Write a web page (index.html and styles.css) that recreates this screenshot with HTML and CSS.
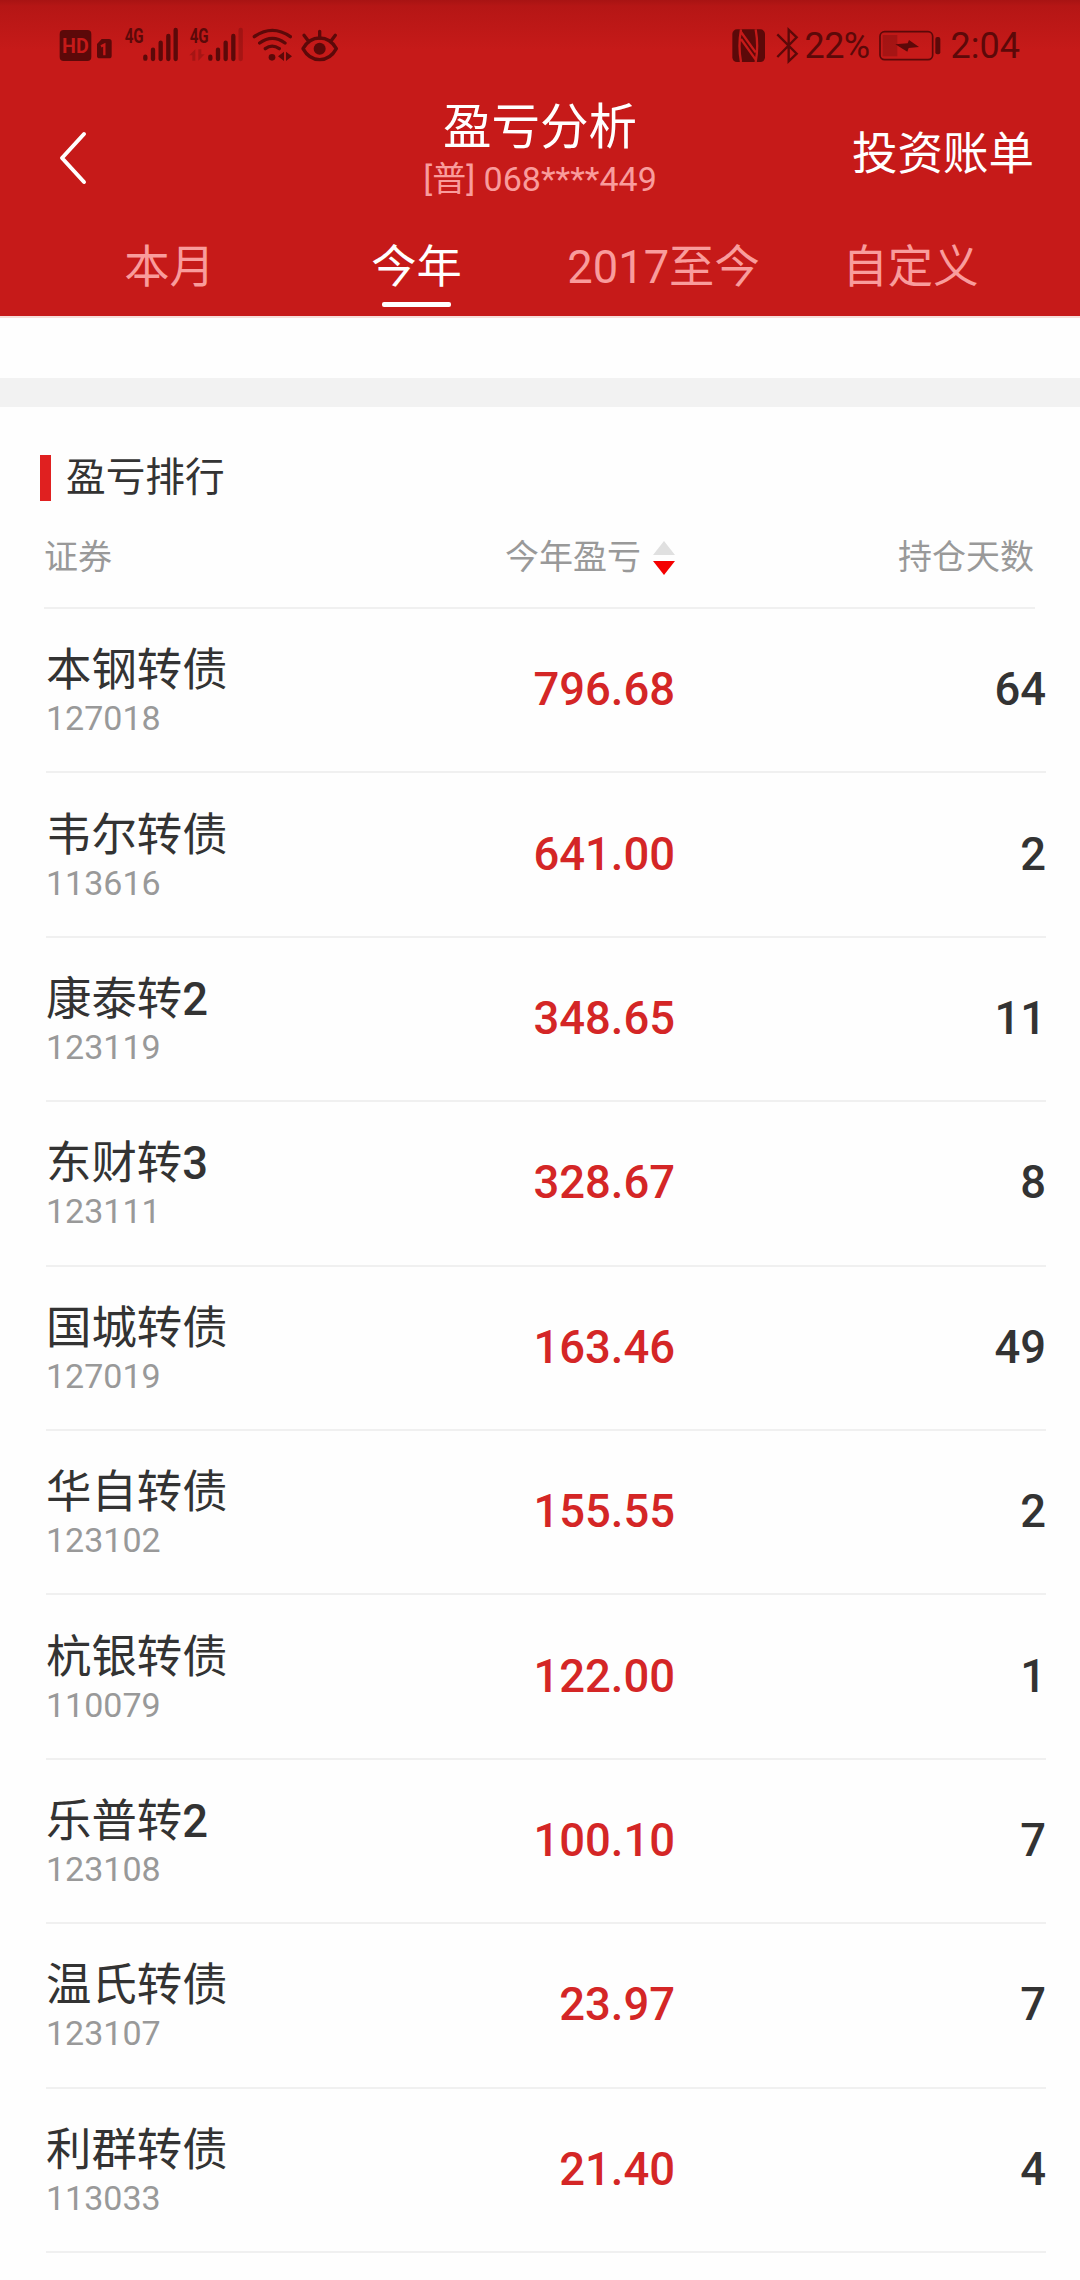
FILE: index.html
```html
<!DOCTYPE html>
<html lang="zh-CN">
    <head>
        <meta charset="utf-8">
        <title>盈亏分析</title>
        <link rel="stylesheet" href="styles.css">
    </head>
    <body>
        <div class="header">
            <div class="status">
                <div class="status-left">
                    <!-- HD + sim -->
                    <svg class="icon hd" width="54" height="40" viewBox="57 48 162 120">
                        <rect x="59" y="60" width="95" height="93" rx="12"/>
                        <text class="cut" x="106" y="128" text-anchor="middle" font-size="58" textLength="80" lengthAdjust="spacingAndGlyphs">HD</text>
                        <path d="M185 87h22q8 0 8 8v42q0 8-8 8h-28q-8 0-8-8v-35z"/>
                        <path class="cutline" d="M183 109l10-5v32"/>
                    </svg>
                    <svg class="icon sig" width="56" height="46" viewBox="252 30 168 138">
                        <text x="254" y="98" font-size="60" textLength="57" lengthAdjust="spacingAndGlyphs">4G</text>
                        <path class="bars" d="M316 140v6M339 119v28M362 98v49M385 78v69M407 60v87"/>
                    </svg>
                    <svg class="icon sig2" width="56" height="46" viewBox="447 30 168 138">
                        <text x="449" y="98" font-size="60" textLength="57" lengthAdjust="spacingAndGlyphs">4G</text>
                        <path class="bars" d="M511 140v6M534 119v28M557 98v49M580 78v69"/>
                        <path class="bars faint" d="M602 60v87"/>
                        <path class="faint" d="M448 136l18-18v34h-9v-16zM475 152v-34h9v15h10z"/>
                    </svg>
                    <svg class="icon wifi" width="40" height="40" viewBox="636 48 120 120">
                        <path class="line" d="M643 80q54-38 108 0M659 99q38-28 76 0M676 116q20-15 42 0"/>
                        <circle cx="696" cy="142" r="10"/>
                        <path d="M714 139l18-14v28zM738 125l18 14-18 14z"/>
                    </svg>
                    <svg class="icon eye" width="38" height="40" viewBox="784 48 114 120">
                        <path class="line" d="M790 116q18-32 50-32t50 32q-18 33-50 33t-50-33z"/>
                        <circle cx="840" cy="116" r="18"/>
                        <path class="line" d="M840 64v20M793 76l13 17M887 76l-13 17"/>
                    </svg>
                </div>
                <div class="status-right">
                    <!-- nfc -->
                    <svg class="icon nfc" width="34" height="40" viewBox="65 48 102 120">
                        <rect x="66" y="58" width="98" height="98" rx="14"/>
                        <path class="cutline" d="M92 58q-9 50 0 98M92 66l44 61M136 58q9 50 0 98M92 87l44 62"/>
                    </svg>
                    <svg class="icon bt" width="24" height="40" viewBox="198 48 72 120">
                        <path class="line" d="M202 73l58 58-24 23v-95l24 23-58 59"/>
                    </svg>
                    <span class="percent">22%</span>
                    <svg class="icon battery" width="62" height="40" viewBox="508 48 186 120">
                        <rect class="case" x="511" y="65" width="158" height="84" rx="14"/>
                        <rect class="level" x="519" y="75" width="44" height="64"/>
                        <path d="M557 103l37-3 4-10 30 21-31 3-4 11z"/>
                        <rect x="677" y="81" width="15" height="52" rx="6"/>
                    </svg>
                    <span class="time">2:04</span>
                </div>
            </div>
            <div class="nav">
                <svg class="back" width="30" height="54" viewBox="0 0 30 54">
                    <path d="M26 3L4 27l22 24"/>
                </svg>
                <div class="title">
                    <h1>盈亏分析</h1>
                    <div class="account">[普] 068****449</div>
                </div>
                <div class="bill">投资账单</div>
            </div>
            <div class="tabs">
                <div class="tab">本月</div>
                <div class="tab active">今年</div>
                <div class="tab">2017至今</div>
                <div class="tab">自定义</div>
            </div>
        </div>
        <div class="band"></div>
        <div class="rank">
            <h2>盈亏排行</h2>
            <div class="row head">
                <div>证券</div>
                <div class="sort">今年盈亏
                    <svg width="22" height="34" viewBox="0 0 22 34">
                        <path class="up" d="M11 0l11 14H0z"/>
                        <path class="down" d="M0 20h22L11 34z"/>
                    </svg>
                </div>
                <div class="held">持仓天数</div>
            </div>
            <div class="row">
                <div class="stock">本钢转债<span class="code">127018</span></div>
                <div class="profit">796.68</div>
                <div class="days">64</div>
            </div>
            <div class="row">
                <div class="stock">韦尔转债<span class="code">113616</span></div>
                <div class="profit">641.00</div>
                <div class="days">2</div>
            </div>
            <div class="row">
                <div class="stock">康泰转<b>2</b><span class="code">123119</span></div>
                <div class="profit">348.65</div>
                <div class="days">11</div>
            </div>
            <div class="row">
                <div class="stock">东财转<b>3</b><span class="code">123111</span></div>
                <div class="profit">328.67</div>
                <div class="days">8</div>
            </div>
            <div class="row">
                <div class="stock">国城转债<span class="code">127019</span></div>
                <div class="profit">163.46</div>
                <div class="days">49</div>
            </div>
            <div class="row">
                <div class="stock">华自转债<span class="code">123102</span></div>
                <div class="profit">155.55</div>
                <div class="days">2</div>
            </div>
            <div class="row">
                <div class="stock">杭银转债<span class="code">110079</span></div>
                <div class="profit">122.00</div>
                <div class="days">1</div>
            </div>
            <div class="row">
                <div class="stock">乐普转<b>2</b><span class="code">123108</span></div>
                <div class="profit">100.10</div>
                <div class="days">7</div>
            </div>
            <div class="row">
                <div class="stock">温氏转债<span class="code">123107</span></div>
                <div class="profit">23.97</div>
                <div class="days">7</div>
            </div>
            <div class="row">
                <div class="stock">利群转债<span class="code">113033</span></div>
                <div class="profit">21.40</div>
                <div class="days">4</div>
            </div>
        </div>
    </body>
</html>
```
FILE: styles.css
```css
*{
    margin: 0;
    padding: 0;
    box-sizing: border-box;
}
body{
    width: 1080px;
    height: 2280px;
    overflow: hidden;
    background-color: #fefefe;
    color: #333;
    font-family: Roboto, "Noto Sans CJK SC", sans-serif;
}
.header{
    height: 318px;
    background: linear-gradient(#a81313, #b51615 6px, #c61a19 50px);
    border-bottom: 2px solid #f6dedb;
    color: white;
}

/* status bar */
.status{
    display: flex;
    justify-content: space-between;
    height: 80px;
    padding: 20px 60px 0 59px;
    color: #5c0909;
}
.status-left, .status-right{
    display: flex;
    align-items: flex-end;
    height: 46px;
    line-height: 40px;
    font-size: 36px;
}
.icon{
    display: block;
    overflow: visible;
    fill: #5c0909;
    font-weight: bold;
}
.line, .bars, .case{
    fill: none;
    stroke: #5c0909;
    stroke-width: 10;
    stroke-linecap: round;
    stroke-linejoin: round;
}
.bt .line{
    stroke-width: 7;
    stroke-linecap: butt;
    stroke-linejoin: miter;
}
.bars{
    stroke-width: 13;
}
.case{
    stroke-width: 5;
}
.cut{
    fill: #c61a19;
}
.cutline{
    fill: none;
    stroke: #c61a19;
    stroke-width: 7;
}
.faint, .level{
    opacity: .3;
}
.sig{
    margin-left: 11px;
}
.sig2{
    margin-left: 9px;
}
.wifi{
    margin-left: 7px;
}
.eye{
    margin-left: 9px;
}
.bt{
    margin-left: 10px;
}
.percent{
    margin-left: 5px;
    width: 66px;
    letter-spacing: -.6px;
}
.battery{
    margin-left: 8px;
}
.time{
    margin-left: 10px;
}

/* title bar */
.nav{
    display: grid;
    grid-template-columns: 300px 1fr 300px;
    height: 140px;
    padding: 0 46px 0 57px;
}
.back{
    margin: 51px 0 0 1px;
    fill: none;
    stroke: white;
    stroke-width: 4;
    stroke-linecap: round;
    stroke-linejoin: round;
}
.title{
    padding: 18px 11px 0 0;
    text-align: center;
    white-space: nowrap;
}
.title h1{
    font-size: 48.5px;
    font-weight: normal;
    line-height: 60px;
}
.account{
    font-size: 34px;
    line-height: 42px;
    color: #f99c9c;
}
.bill{
    padding-top: 45px;
    font-size: 45.5px;
    line-height: 60px;
    text-align: right;
}
.tabs{
    display: grid;
    grid-template-columns: 247px 247px 247px 247px;
    justify-content: center;
    height: 96px;
}
.tab{
    display: flex;
    flex-direction: column;
    align-items: center;
    padding-top: 18px;
    font-size: 45.3px;
    line-height: 60px;
    color: #f99c9c;
}
.active{
    color: white;
}
.active::after{
    content: "";
    width: 69px;
    height: 5px;
    margin-top: 4px;
    border-radius: 2px;
    background-color: white;
}
.band{
    height: 29px;
    margin-top: 60px;
    background-color: #f2f2f2;
}

/* ranking list */
.rank{
    padding: 48px 34px 0 40px;
}
.rank h2{
    height: 46px;
    border-left: 11px solid #e02020;
    padding-left: 15px;
    font-size: 39.7px;
    font-weight: normal;
    line-height: 46px;
}
.row{
    display: grid;
    grid-template-columns: 400px 229px 1fr;
    align-items: center;
    height: 164.4px;
    margin-left: 6px;
    border-bottom: 2px solid #f0f0f0;
    font-size: 45.4px;
}
.head{
    grid-template-columns: 401px 230px 1fr;
    height: 108px;
    margin-left: 4px;
    margin-right: 11px;
    font-size: 34px;
    color: #999;
}
.sort{
    display: flex;
    justify-content: flex-end;
    align-items: center;
    gap: 12px;
}
.sort svg{
    margin-top: 7px;
}
.up{
    fill: #e0e0e0;
}
.down{
    fill: #f40000;
}
.stock{
    padding-top: 3px;
    line-height: 54px;
}
.stock b{
    font-weight: 500;
}
.code{
    display: block;
    font-size: 34px;
    line-height: 41px;
    color: #999;
}
.profit, .days{
    padding-bottom: 1px;
    text-align: right;
    font-weight: 500;
}
.profit{
    color: #d42626;
}
.held{
    padding-right: 1px;
    text-align: right;
}
```
